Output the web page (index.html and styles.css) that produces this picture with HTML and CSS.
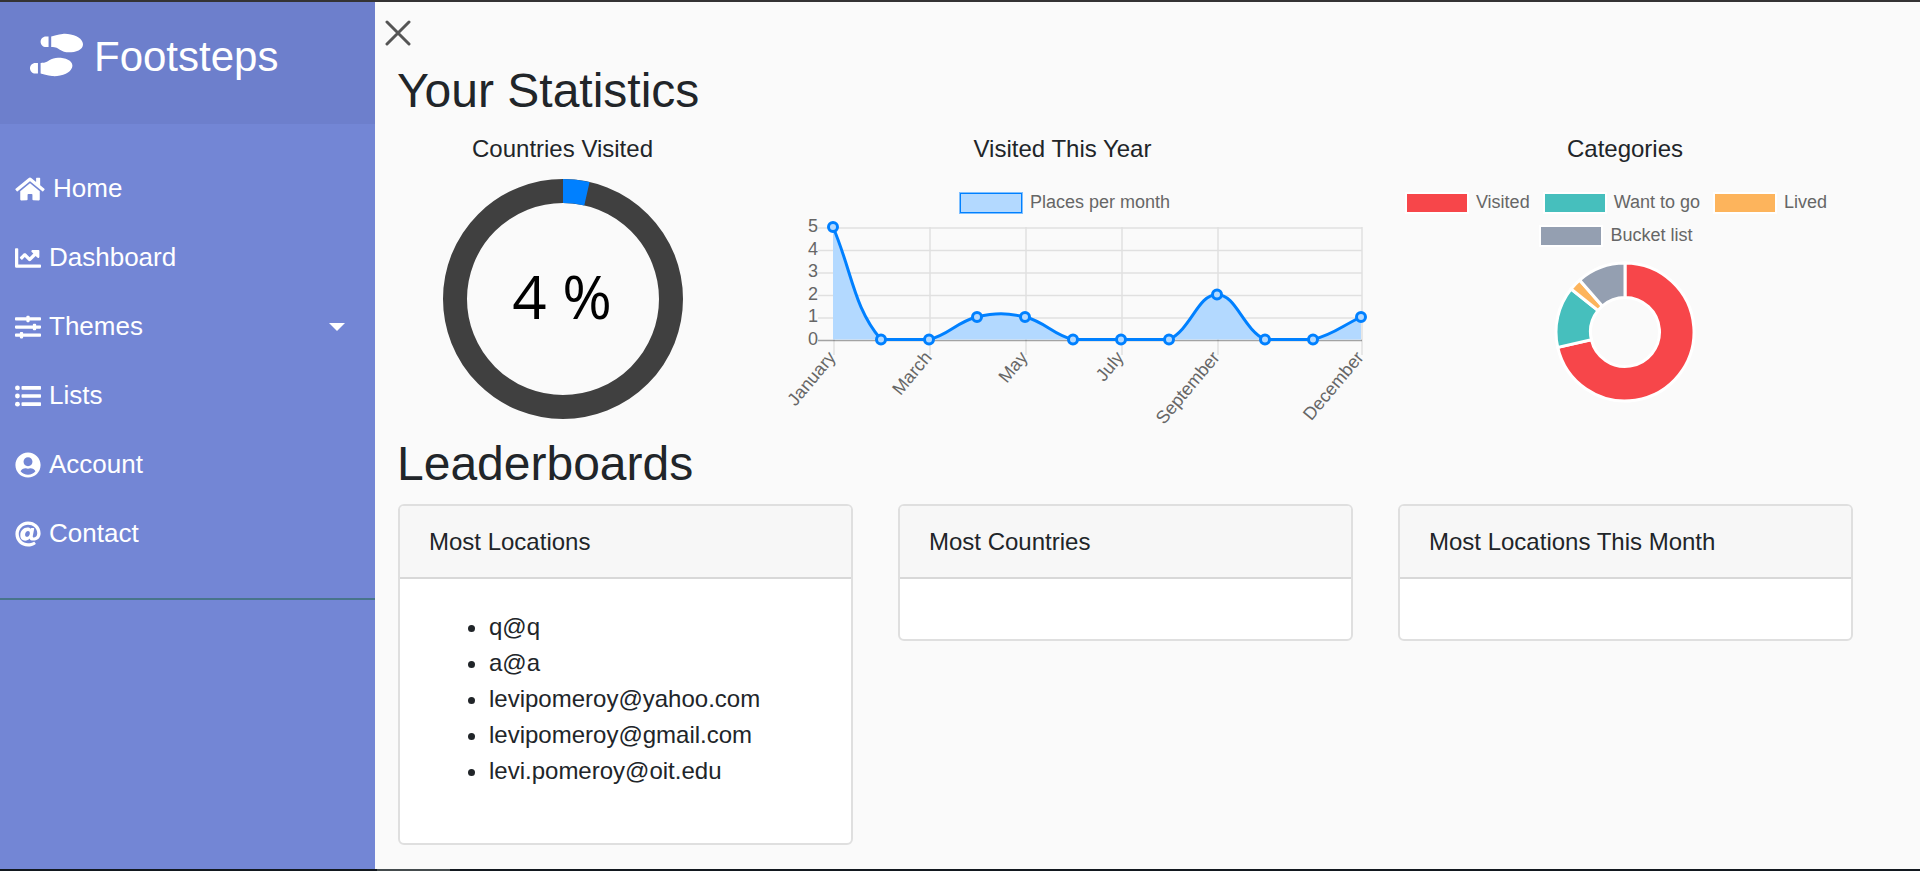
FILE: index.html
```html
<!DOCTYPE html>
<html lang="en">
<head>
<meta charset="utf-8">
<title>Footsteps</title>
<meta name="viewport" content="width=device-width, initial-scale=1">
<link rel="stylesheet" href="styles.css">
</head>
<body>
<div class="page">
  <nav class="sidebar">
    <header class="sidebar-header">
      <svg class="brand-icon" viewBox="0 0 640 512" aria-hidden="true"><path d="M192 160h32V32h-32c-35.350 0-64 28.650-64 64s28.650 64 64 64zM0 416c0 35.350 28.650 64 64 64h32V352H64c-35.350 0-64 28.650-64 64zm337.460-128c-34.910 0-76.160 13.120-104.730 32-24.790 16.380-44.520 32-104.730 32v128l57.530 15.970c26.210 7.280 53.010 13.120 80.310 15.050 32.690 2.310 65.600.670 97.580-6.200C472.900 481.300 512 429.220 512 384c0-64-84.180-96-174.540-96zM491.420 7.250C459.440.320 426.530-1.330 393.840.990c-27.300 1.930-54.100 7.770-80.310 15.040L256 32v128c60.200 0 79.940 15.620 104.730 32 28.570 18.880 69.820 32 104.730 32C555.820 224 640 192 640 128c0-45.220-39.100-97.300-148.580-120.750z"/></svg>
      <span class="brand-name">Footsteps</span>
    </header>
    <ul class="menu">
      <li><a class="menu-link" href="#home">
        <svg class="menu-icon menu-icon-wide" viewBox="0 0 576 512" aria-hidden="true"><path d="M280.370 148.260L96 300.110V464a16 16 0 0 0 16 16l112.060-.290a16 16 0 0 0 15.920-16V368a16 16 0 0 1 16-16h64a16 16 0 0 1 16 16v95.640a16 16 0 0 0 16 16.050L464 480a16 16 0 0 0 16-16V300L295.670 148.260a12.190 12.190 0 0 0-15.300 0zM571.600 251.470L488 182.560V44.050a12 12 0 0 0-12-12h-56a12 12 0 0 0-12 12v72.610L318.470 43a48 48 0 0 0-61 0L4.340 251.470a12 12 0 0 0-1.600 16.900l25.500 31A12 12 0 0 0 45.150 301l235.220-193.740a12.190 12.190 0 0 1 15.300 0L530.900 301a12 12 0 0 0 16.900-1.600l25.500-31a12 12 0 0 0-1.700-16.930z"/></svg>
        <span>Home</span></a></li>
      <li><a class="menu-link" href="#dashboard">
        <svg class="menu-icon" viewBox="0 0 512 512" aria-hidden="true"><path d="M496 384H64V80c0-8.840-7.160-16-16-16H16C7.160 64 0 71.160 0 80v336c0 17.670 14.330 32 32 32h464c8.840 0 16-7.160 16-16v-32c0-8.840-7.160-16-16-16zM464 96H345.940c-21.380 0-32.090 25.850-16.970 40.970l32.400 32.400L288 242.750l-73.370-73.370c-12.500-12.500-32.760-12.500-45.250 0l-68.690 68.690c-6.250 6.250-6.250 16.380 0 22.630l22.620 22.620c6.250 6.250 16.380 6.250 22.630 0L192 237.250l73.370 73.370c12.500 12.500 32.760 12.500 45.250 0l96-96 32.400 32.400c15.120 15.120 40.970 4.410 40.970-16.970V112c.010-8.840-7.150-16-15.990-16z"/></svg>
        <span>Dashboard</span></a></li>
      <li><a class="menu-link" href="#themes" aria-expanded="false">
        <svg class="menu-icon" viewBox="0 0 512 512" aria-hidden="true"><path d="M496 384H160v-16c0-8.800-7.200-16-16-16h-32c-8.800 0-16 7.200-16 16v16H16c-8.800 0-16 7.200-16 16v32c0 8.800 7.200 16 16 16h80v16c0 8.800 7.200 16 16 16h32c8.800 0 16-7.200 16-16v-16h336c8.800 0 16-7.200 16-16v-32c0-8.800-7.200-16-16-16zm0-160h-80v-16c0-8.800-7.200-16-16-16h-32c-8.800 0-16 7.200-16 16v16H16c-8.800 0-16 7.200-16 16v32c0 8.800 7.200 16 16 16h336v16c0 8.800 7.200 16 16 16h32c8.800 0 16-7.200 16-16v-16h80c8.800 0 16-7.200 16-16v-32c0-8.800-7.200-16-16-16zm0-160H288V48c0-8.800-7.200-16-16-16h-32c-8.800 0-16 7.200-16 16v16H16C7.200 64 0 71.200 0 80v32c0 8.800 7.200 16 16 16h208v16c0 8.800 7.200 16 16 16h32c8.800 0 16-7.200 16-16v-16h208c8.800 0 16-7.200 16-16V80c0-8.800-7.200-16-16-16z"/></svg>
        <span>Themes</span><span class="caret"></span></a></li>
      <li><a class="menu-link" href="#lists">
        <svg class="menu-icon" viewBox="0 0 512 512" aria-hidden="true"><circle cx="48" cy="96" r="48"/><circle cx="48" cy="256" r="48"/><circle cx="48" cy="416" r="48"/><rect x="128" y="60" width="384" height="72" rx="16"/><rect x="128" y="220" width="384" height="72" rx="16"/><rect x="128" y="380" width="384" height="72" rx="16"/></svg>
        <span>Lists</span></a></li>
      <li><a class="menu-link" href="#account">
        <svg class="menu-icon" viewBox="0 0 496 512" aria-hidden="true"><path d="M248 8C111 8 0 119 0 256s111 248 248 248 248-111 248-248S385 8 248 8zm0 96c48.600 0 88 39.400 88 88s-39.400 88-88 88-88-39.400-88-88 39.400-88 88-88zm0 344c-58.700 0-111.300-26.600-146.500-68.200 18.800-35.400 55.600-59.800 98.500-59.800 2.400 0 4.800.400 7.100 1.100 13 4.200 26.600 6.900 40.900 6.900 14.300 0 28-2.700 40.900-6.900 2.300-.700 4.700-1.100 7.100-1.100 42.900 0 79.700 24.400 98.500 59.800C359.300 421.400 306.700 448 248 448z"/></svg>
        <span>Account</span></a></li>
      <li><a class="menu-link" href="#contact">
        <svg class="menu-icon" viewBox="0 0 512 512" aria-hidden="true"><path d="M256 8C118.941 8 8 118.919 8 256c0 137.058 110.919 248 248 248 52.925 0 104.680-17.078 147.092-48.319 5.501-4.052 6.423-11.924 2.095-17.211l-20.253-24.774c-4.038-4.939-11.190-5.751-16.351-2.010C336.067 425.299 296.369 438 256 438c-100.575 0-182-81.447-182-182 0-100.575 81.447-182 182-182 92.783 0 182 63.520 182 165.692 0 58.298-36.990 84.980-67.440 84.980-17.834 0-24.400-8.930-19.270-34.680L378.060 151.600c1.456-7.476-4.273-14.448-11.893-14.448h-45.730a12.117 12.117 0 0 0-11.870 9.680c-.660 3.230-.940 4.470-1.400 7.830-11.430-17.430-34.700-27.800-62.970-27.800-74.290 0-139.830 62.890-139.830 152.390 0 64.300 36.890 107.640 96.470 107.640 32.320 0 66.770-17.900 86.350-44.140 4.580 35.340 34.290 41.140 70.310 41.140C458.880 383.870 504 318.640 504 239.690 504 104.300 393.930 8 256 8zm-21.680 304.430c-22.230 0-36.050-15.620-36.050-40.770 0-44.990 30.780-72.730 58.630-72.730 22.290 0 35.600 15.240 35.600 40.770 0 45.060-33.870 72.730-58.180 72.730z"/></svg>
        <span>Contact</span></a></li>
    </ul>
  </nav>

  <main class="content">
    <button class="sidebar-toggle" type="button" aria-label="Close sidebar">
      <svg class="cross" viewBox="0 0 26 26" aria-hidden="true"><path d="M2 2L24 24M24 2L2 24"/></svg>
    </button>

    <h2 class="heading">Your Statistics</h2>
    <section class="stats">
      <div class="stat">
        <div class="caption">Countries Visited</div>
        <svg class="ring" viewBox="0 0 240 240" role="img" aria-label="4 percent of countries visited">
          <circle class="ring-track" cx="120" cy="120" r="108"/>
          <circle class="ring-value" cx="120" cy="120" r="108" pathLength="100" transform="rotate(-90 120 120)"/>
          <text class="ring-text" x="119" y="140">4 %</text>
        </svg>
      </div>

      <div class="stat">
        <div class="caption">Visited This Year</div>
        <ul class="legend legend-line">
          <li class="legend-item"><span class="swatch swatch-line"></span><span>Places per month</span></li>
        </ul>
        <svg class="line-chart" viewBox="0 0 625 221" role="img" aria-label="Places visited per month">
          <path class="grid" d="M68 14H612M68 36.500H612M68 59H612M68 81.500H612M68 104H612M84 13V141M180 13V141M276 13V141M372 13V141M468 13V141M612 13V141"/>
          <path class="zero" d="M68 126.500H612"/>
          <path class="area" d="M83 13C102.200 58 103.400 93.200 131 125.500C141.800 125.500 160.800 125.500 179 125.500C199.200 120.800 206.800 107.700 227 103C245.200 98.700 256.800 98.700 275 103C295.200 107.700 302.800 120.800 323 125.500H419C441.200 115.100 447.800 80.500 467 80.500C486.200 80.500 492.800 115.100 515 125.500H563C583.200 120.800 591.800 112 611 103V125.500H83Z"/>
          <path class="line" d="M83 13C102.200 58 103.400 93.200 131 125.500C141.800 125.500 160.800 125.500 179 125.500C199.200 120.800 206.800 107.700 227 103C245.200 98.700 256.800 98.700 275 103C295.200 107.700 302.800 120.800 323 125.500H419C441.200 115.100 447.800 80.500 467 80.500C486.200 80.500 492.800 115.100 515 125.500H563C583.200 120.800 591.800 112 611 103"/>
          <g class="points">
            <circle cx="83" cy="13" r="4.500"/><circle cx="131" cy="125.500" r="4.500"/><circle cx="179" cy="125.500" r="4.500"/><circle cx="227" cy="103" r="4.500"/><circle cx="275" cy="103" r="4.500"/><circle cx="323" cy="125.500" r="4.500"/><circle cx="371" cy="125.500" r="4.500"/><circle cx="419" cy="125.500" r="4.500"/><circle cx="467" cy="80.500" r="4.500"/><circle cx="515" cy="125.500" r="4.500"/><circle cx="563" cy="125.500" r="4.500"/><circle cx="611" cy="103" r="4.500"/>
          </g>
          <g class="axis">
            <text x="68" y="18">5</text><text x="68" y="41">4</text><text x="68" y="63">3</text><text x="68" y="86">2</text><text x="68" y="108">1</text><text x="68" y="131">0</text>
            <text transform="translate(82 140) rotate(-50)" y="6">January</text>
            <text transform="translate(178 140) rotate(-50)" y="6">March</text>
            <text transform="translate(274 140) rotate(-50)" y="6">May</text>
            <text transform="translate(370 140) rotate(-50)" y="6">July</text>
            <text transform="translate(466 140) rotate(-50)" y="6">September</text>
            <text transform="translate(610 140) rotate(-50)" y="6">December</text>
          </g>
        </svg>
      </div>

      <div class="stat">
        <div class="caption">Categories</div>
        <ul class="legend legend-categories">
          <li class="legend-item"><span class="swatch swatch-visited"></span><span>Visited</span></li>
          <li class="legend-item"><span class="swatch swatch-want"></span><span>Want to go</span></li>
          <li class="legend-item"><span class="swatch swatch-lived"></span><span>Lived</span></li>
          <li class="legend-item"><span class="swatch swatch-bucket"></span><span>Bucket list</span></li>
        </ul>
        <svg class="donut" viewBox="-71 -71 142 142" role="img" aria-label="Places by category">
          <path class="slice-visited" d="M0-69A69 69 0 1 1-67.270 15.350L-33.640 7.680A34.500 34.500 0 1 0 0-34.500Z"/>
          <path class="slice-want" d="M-67.270 15.350A69 69 0 0 1-53.950-43.020L-26.970-21.510A34.500 34.500 0 0 0-33.640 7.680Z"/>
          <path class="slice-lived" d="M-53.950-43.020A69 69 0 0 1-45.400-51.960L-22.700-25.980A34.500 34.500 0 0 0-26.970-21.510Z"/>
          <path class="slice-bucket" d="M-45.400-51.960A69 69 0 0 1 0-69V-34.500A34.500 34.500 0 0 0-22.700-25.980Z"/>
        </svg>
      </div>
    </section>

    <h2 class="heading">Leaderboards</h2>
    <section class="boards">
      <article class="card">
        <div class="card-header">Most Locations</div>
        <div class="card-body">
          <ul class="leaders">
            <li>q@q</li>
            <li>a@a</li>
            <li>levipomeroy@yahoo.com</li>
            <li>levipomeroy@gmail.com</li>
            <li>levi.pomeroy@oit.edu</li>
          </ul>
        </div>
      </article>
      <article class="card">
        <div class="card-header">Most Countries</div>
        <div class="card-body"></div>
      </article>
      <article class="card">
        <div class="card-header">Most Locations This Month</div>
        <div class="card-body"></div>
      </article>
    </section>
  </main>
  <div class="status-edge"></div>
</div>
</body>
</html>
```
FILE: styles.css
```css
*,
*::before,
*::after {
  box-sizing: border-box;
}

body {
  margin: 0;
  background: #fafafa;
  color: #212529;
  font: 24px/36px "Liberation Sans", Arial, sans-serif;
}

ul {
  margin: 0;
  padding: 0;
  list-style: none;
}

.page {
  display: grid;
  grid-template-columns: 375px minmax(0, 1fr);
  grid-template-rows: 1fr 2px;
  min-height: 100vh;
  border-top: 2px solid #343334;
}

/* Sidebar */
.sidebar {
  background: #7386d5;
  color: #fff;
}

.sidebar-header {
  display: flex;
  align-items: flex-start;
  gap: 11px;
  padding: 30px 30px 42px;
  background: #6d7fcc;
}

.brand-icon {
  width: 53px;
  height: 46px;
  fill: currentColor;
}

.brand-name {
  font-size: 42px;
  line-height: 50px;
}

.menu {
  padding: 30px 0;
  border-bottom: 2px solid #47748b;
}

.menu-link {
  display: flex;
  align-items: center;
  gap: 8px;
  padding: 15px 30px 15px 15px;
  color: inherit;
  font-size: 26px;
  line-height: 39px;
  text-decoration: none;
}

.menu-icon {
  width: 26px;
  height: 26px;
  fill: currentColor;
}

.menu-icon-wide {
  width: 30px;
}

.caret {
  margin-left: auto;
  border: 8px solid transparent;
  border-top-color: currentColor;
  border-bottom: 0;
}

/* Main area */
.content {
  padding: 18px 45px 24px 0;
}

.sidebar-toggle {
  display: block;
  margin: 0 0 16px 10px;
  padding: 0;
  border: 0;
  background: none;
  cursor: pointer;
}

.cross {
  display: block;
  width: 26px;
  height: 26px;
  fill: none;
  stroke: #555;
  stroke-width: 3;
  stroke-linecap: round;
}

.heading {
  margin: 0 0 11px;
  padding-left: 22px;
  font-size: 48px;
  font-weight: 400;
  line-height: 58px;
}

.stats {
  display: grid;
  grid-template-columns: 3fr 5fr 4fr;
}

.stat {
  min-width: 0;
}

.caption {
  text-align: center;
}

/* Percentage ring */
.ring {
  display: block;
  width: 240px;
  margin: 12px auto 0;
}

.ring circle {
  fill: none;
  stroke-width: 24;
}

.ring-track {
  stroke: #404040;
}

.ring .ring-value {
  stroke: #0080ff;
  stroke-dasharray: 3.56 96.44;
}

.ring-text {
  font: 60px "Open Sans", "Noto Sans", sans-serif;
  text-anchor: middle;
}

/* Chart legends */
.legend {
  display: flex;
  flex-wrap: wrap;
  justify-content: center;
  gap: 15px;
  margin: 27px 0 2px;
  color: #666;
  font-size: 18px;
  line-height: 16px;
}

.legend-line {
  padding-left: 6px;
}

.legend-categories {
  padding: 0 36px 0 20px;
}

.legend-item {
  display: flex;
  gap: 9px;
}

.swatch {
  width: 60px;
  height: 18px;
  box-shadow: 0 0 0 2px #fff;
}

.swatch-line {
  background: #b3d9ff;
  box-shadow: 0 0 0 1px #0080ff, 0 0 0 2px #80c0ff;
}

.swatch-visited {
  background: #f7464a;
}

.swatch-want {
  background: #46bfbd;
}

.swatch-lived {
  background: #fdb45c;
}

.swatch-bucket {
  background: #949fb1;
}

/* Line chart */
.line-chart {
  display: block;
  width: 100%;
}

.grid,
.zero,
.line {
  fill: none;
}

.grid {
  stroke: rgba(0, 0, 0, 0.1);
  stroke-width: 1.5;
}

.zero {
  stroke: rgba(0, 0, 0, 0.35);
  stroke-width: 1.5;
}

.area {
  fill: #b3d9ff;
}

.line {
  stroke: #0080ff;
  stroke-width: 3;
}

.points {
  fill: #b3d9ff;
  stroke: #0080ff;
  stroke-width: 3;
}

.axis {
  fill: #666;
  font-size: 18px;
  text-anchor: end;
}

/* Doughnut chart */
.donut {
  display: block;
  width: 142px;
  margin: 16px auto 0;
  stroke: #fff;
  stroke-width: 3;
}

.slice-visited {
  fill: #f7464a;
}

.slice-want {
  fill: #46bfbd;
}

.slice-lived {
  fill: #fdb45c;
}

.slice-bucket {
  fill: #949fb1;
}

/* Leaderboards */
.boards {
  display: grid;
  grid-template-columns: repeat(3, minmax(0, 1fr));
  align-items: start;
  gap: 45px;
  padding: 0 22px 0 23px;
}

.card {
  border: 2px solid #dfdfdf;
  border-radius: 6px;
  background: #fff;
}

.card-header {
  padding: 18px 29px 17px;
  border-bottom: 2px solid #d8d8d8;
  border-radius: 4px 4px 0 0;
  background: #f7f7f7;
}

.card-body {
  padding: 30px 29px;
}

.leaders {
  margin-bottom: 24px;
  padding-left: 60px;
  list-style: disc;
}

/* Dark edge along the bottom of the window */
.status-edge {
  grid-column: 1 / -1;
  background: linear-gradient(90deg, #12181f 377px, #444b4d 377px, #444b4d 450px, #12181f 450px);
}
```
